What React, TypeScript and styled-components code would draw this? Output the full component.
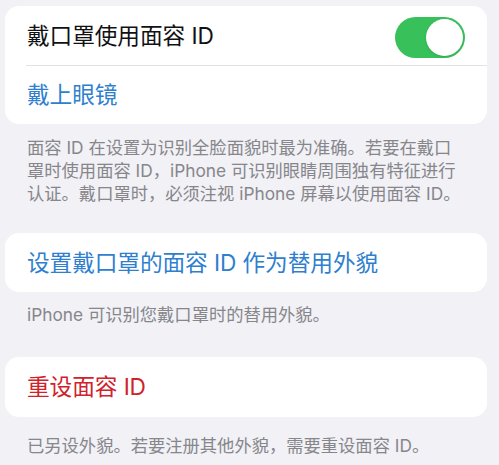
import React from "react";
import styled, { createGlobalStyle } from "styled-components";

const Global = createGlobalStyle`
  html, body {
    margin: 0;
    padding: 0;
    background: #f1f1f6;
  }
  body {
    font-family: Inter, "Noto Sans CJK SC", "Noto Sans", sans-serif;
    -webkit-font-smoothing: antialiased;
  }
`;

const Page = styled.div`
  width: 499px;
  height: 465px;
  box-sizing: border-box;
  padding: 6px 12px 0 5px;
  background: #f1f1f6;
  overflow: hidden;
  display: flex;
  flex-direction: column;
`;

const Card = styled.div<{ $top?: number }>`
  margin-top: ${(p) => p.$top ?? 0}px;
  background: #ffffff;
  border-radius: 14px;
  display: flex;
  flex-direction: column;
  overflow: hidden;
`;

const Row = styled.div<{ $h?: number }>`
  height: ${(p) => p.$h ?? 59}px;
  display: flex;
  align-items: center;
  justify-content: space-between;
  padding: 0 22px 0 22px;
`;

const Separator = styled.div`
  height: 1px;
  margin-left: 21px;
  background: #e2e2e6;
`;

const Label = styled.span<{ $tone?: "default" | "blue" | "red" }>`
  font-size: 22.7px;
  line-height: 28px;
  font-weight: 400;
  letter-spacing: -0.1px;
  color: ${(p) =>
    p.$tone === "blue" ? "#2f7fce" : p.$tone === "red" ? "#d0222b" : "#111113"};
`;

const Footer = styled.div<{ $top?: number }>`
  padding: ${(p) => p.$top ?? 11}px 8px 0 22px;
  font-size: 17.3px;
  line-height: 23px;
  color: #86868b;
  white-space: nowrap;
`;

const Toggle = styled.div<{ $on: boolean }>`
  width: 70px;
  height: 41px;
  border-radius: 21px;
  background: ${(p) => (p.$on ? "#38c05b" : "#e5e5ea")};
  display: flex;
  align-items: center;
  justify-content: ${(p) => (p.$on ? "flex-end" : "flex-start")};
  padding: 0 2px;
  box-sizing: border-box;
  margin-top: 3px;
`;

const Knob = styled.div`
  width: 37px;
  height: 37px;
  border-radius: 50%;
  background: #ffffff;
  box-shadow: 0 1px 3px rgba(0, 0, 0, 0.12);
`;

export default function App() {
  return (
    <>
      <Global />
      <Page>
        <Card>
          <Row>
            <Label>戴口罩使用面容 ID</Label>
            <Toggle $on>
              <Knob />
            </Toggle>
          </Row>
          <Separator />
          <Row $h={58}>
            <Label $tone="blue">戴上眼镜</Label>
          </Row>
        </Card>
        <Footer $top={12}>
          面容 ID 在设置为识别全脸面貌时最为准确。若要在戴口
          <br />
          罩时使用面容 ID，iPhone 可识别眼睛周围独有特征进行
          <br />
          认证。戴口罩时，必须注视 iPhone 屏幕以使用面容 ID。
        </Footer>
        <Card $top={28}>
          <Row>
            <Label $tone="blue">设置戴口罩的面容 ID 作为替用外貌</Label>
          </Row>
        </Card>
        <Footer $top={11}>iPhone 可识别您戴口罩时的替用外貌。</Footer>
        <Card $top={31}>
          <Row $h={60}>
            <Label $tone="red">重设面容 ID</Label>
          </Row>
        </Card>
        <Footer $top={17}>已另设外貌。若要注册其他外貌，需要重设面容 ID。</Footer>
      </Page>
    </>
  );
}
